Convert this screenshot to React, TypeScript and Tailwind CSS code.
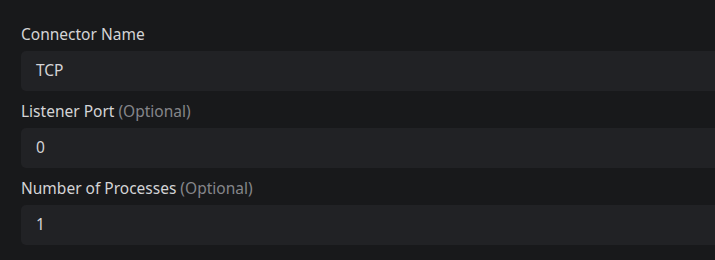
import React from "react";

function Field({ label, optional, value }: { label: string; optional?: boolean; value: string }) {
  return (
    <div className="flex flex-col gap-[6px]">
      <div className="h-[20px] text-[15.5px] leading-[19px] text-[#d4d4d6]">
        {label}
        {optional && <span className="text-[#85868a]"> (Optional)</span>}
      </div>
      <div className="h-[40px] w-[720px] rounded-[5px] bg-[#212225] pl-[15px] flex items-center text-[15.5px] text-[#d4d4d6]">
        {value}
      </div>
    </div>
  );
}

export default function App() {
  return (
    <div
      className="w-[715px] h-[260px] overflow-hidden bg-[#18191b] pt-[25px] pl-[21px] flex flex-col gap-[11px]"
      style={{ fontFamily: '"Noto Sans", sans-serif' }}
    >
      <Field label="Connector Name" value="TCP" />
      <Field label="Listener Port" optional value="0" />
      <Field label="Number of Processes" optional value="1" />
    </div>
  );
}
